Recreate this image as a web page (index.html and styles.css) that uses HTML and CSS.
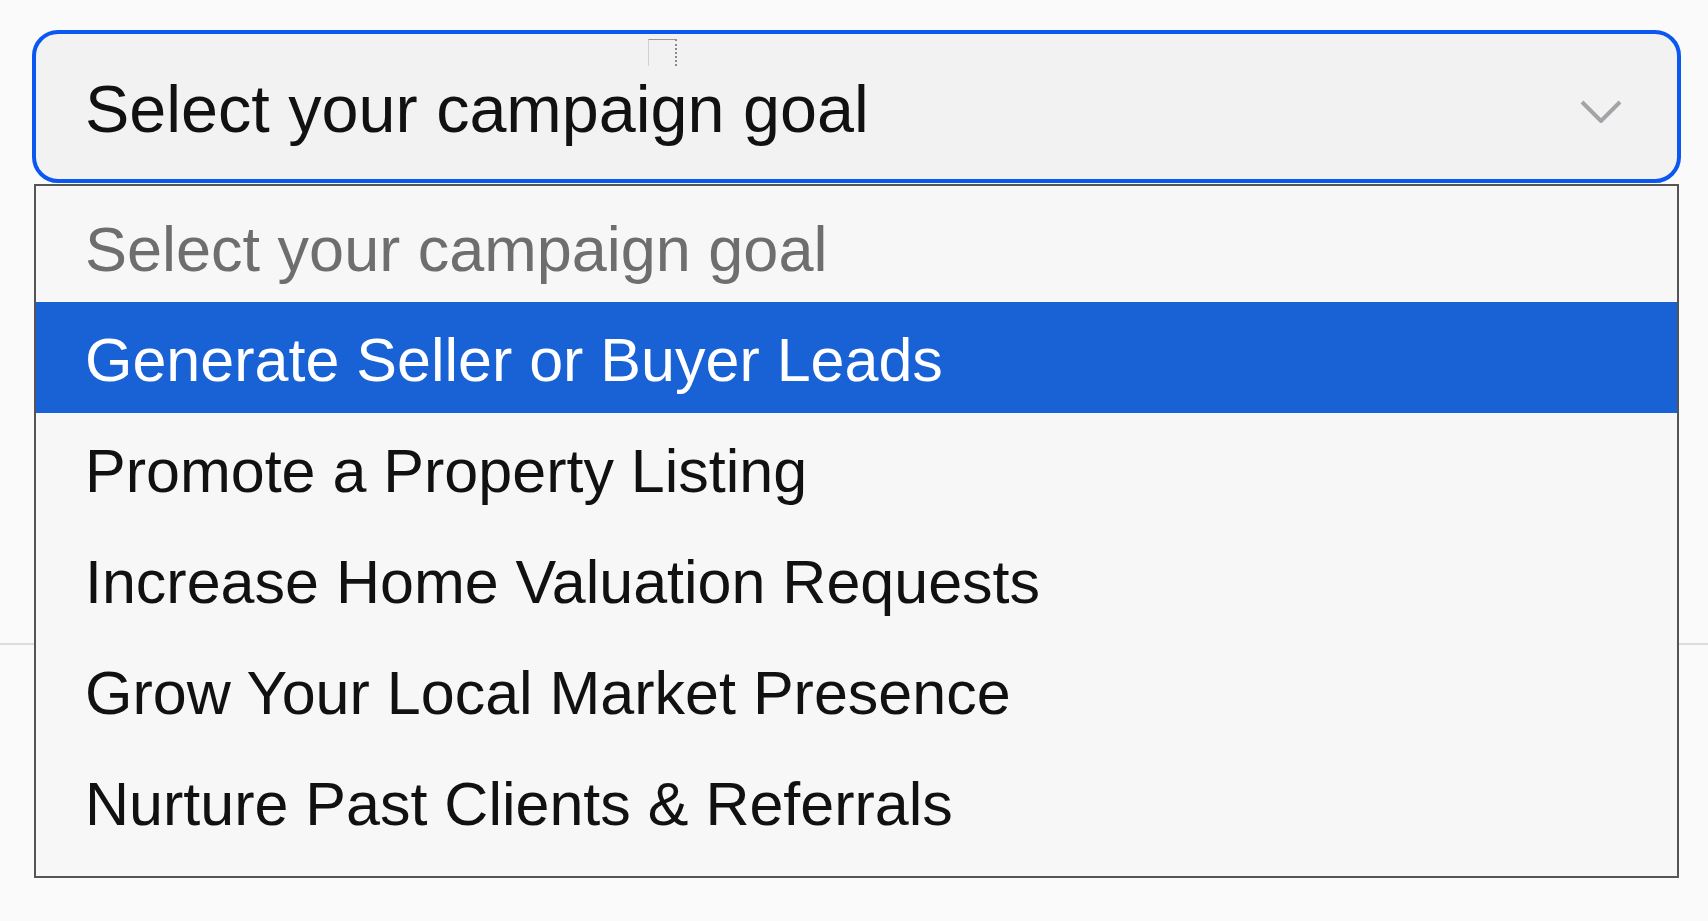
FILE: index.html
```html
<!DOCTYPE html>
<html lang="en">
<head>
    <meta charset="UTF-8">
    <meta name="viewport" content="width=device-width, initial-scale=1.0">
    <title>Campaign Goal</title>
    <link rel="stylesheet" href="styles.css">
</head>
<body>
    <div class="field">
        <div class="select">
            <span class="select-value">Select your campaign goal</span>
            <span class="caret-box"></span>
            <svg class="chevron" width="42" height="24" viewBox="0 0 42 24">
                <polyline points="2,3 21,22 40,3" fill="none" stroke="#a3a3a8" stroke-width="4"/>
            </svg>
        </div>

        <!-- lista desplegada -->
        <ul class="menu">
            <li class="option placeholder">Select your campaign goal</li>
            <li class="option selected">Generate Seller or Buyer Leads</li>
            <li class="option">Promote a Property Listing</li>
            <li class="option">Increase Home Valuation Requests</li>
            <li class="option">Grow Your Local Market Presence</li>
            <li class="option">Nurture Past Clients &amp; Referrals</li>
        </ul>
    </div>

    <div class="divider"></div>
</body>
</html>
```

FILE: styles.css
```css
/* General */
html, body {
    min-height: 921px;
}

body {
    margin: 0;
    padding: 30px 0 0;
    box-sizing: border-box;
    background: #fafafa;
    font-family: 'Liberation Sans', Arial, sans-serif;
    color: #111111;
}

/* Campo */
.field {
    position: relative;
    margin: 0 27px 0 32px;
}

.select {
    position: relative;
    height: 153px;
    box-sizing: border-box;
    border: 4px solid #0a58f0;
    border-radius: 26px;
    background: #f2f2f2;
    display: flex;
    align-items: center;
    justify-content: space-between;
    padding: 6px 55px 0 49px;
}

.select-value {
    font-size: 66.5px;
    line-height: 1.149;
}

.chevron {
    margin-top: 2px;
}

.caret-box {
    position: absolute;
    left: 612px;
    top: 5px;
    width: 26px;
    height: 26px;
    border-top: 1px solid #9a9a9a;
    border-right: 2px dotted #8a8a8a;
    border-left: 1px solid #d0d0d0;
}

/* Lista */
.menu {
    position: absolute;
    top: 154px;
    left: 2px;
    right: 2px;
    margin: 0;
    padding: 5px 0 19px;
    list-style: none;
    background: #f7f7f7;
    border: 2px solid #555555;
}

.option {
    height: 111px;
    box-sizing: border-box;
    padding: 6px 0 0 49px;
    font-size: 61px;
    line-height: 105px;
    white-space: nowrap;
}

.placeholder {
    color: #6e6e6e;
    font-size: 63px;
}

.selected {
    background: #1862d6;
    color: #ffffff;
}

.divider {
    margin-top: 460px;
    height: 2px;
    background: #dcdce2;
}
```
